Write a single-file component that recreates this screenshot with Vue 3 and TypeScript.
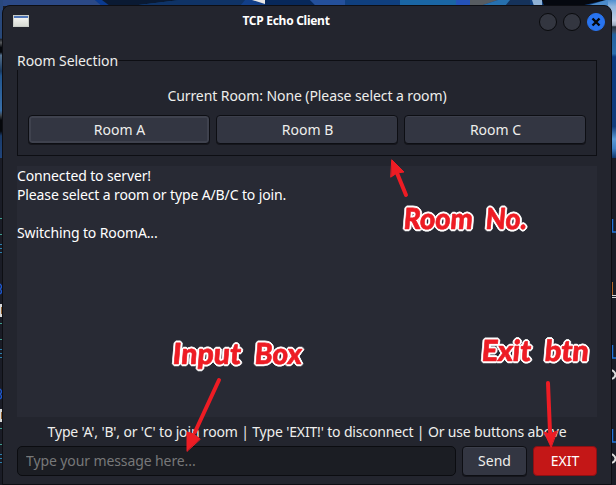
<script setup lang="ts">
import { ref } from 'vue'

const rooms = ['A', 'B', 'C']
const log = ref<string[]>(['Connected to server!', 'Please select a room or type A/B/C to join.', '', 'Switching to RoomA...'])
const message = ref('')
const leftDashes = [218, 234, 323, 339, 428, 444]
const leftTildes = [244, 349, 454]
const leftBlue = [284, 389]
const rightLinks = [219, 345, 429]
const rightBowls = [370, 454]
</script>

<template>
  <div class="desktop">
    <svg class="wallpaper" width="616" height="485" viewBox="0 0 616 485" aria-hidden="true">
      <defs>
        <linearGradient id="edge" x1="0" y1="0" x2="0" y2="1">
          <stop offset="0" stop-color="#29487f" />
          <stop offset=".24" stop-color="#284878" />
          <stop offset=".25" stop-color="#22262d" />
          <stop offset=".27" stop-color="#55585c" />
          <stop offset=".3" stop-color="#05070c" />
          <stop offset=".33" stop-color="#05070c" />
          <stop offset=".35" stop-color="#55718e" />
          <stop offset=".45" stop-color="#18385e" />
          <stop offset=".48" stop-color="#21558e" />
          <stop offset=".7" stop-color="#396fa9" />
          <stop offset=".73" stop-color="#3c444b" />
          <stop offset=".76" stop-color="#05070b" />
          <stop offset=".83" stop-color="#05070b" />
          <stop offset=".86" stop-color="#193b6a" />
          <stop offset="1" stop-color="#20447b" />
        </linearGradient>
        <linearGradient id="edge2" x1="0" y1="0" x2="0" y2="1">
          <stop offset="0" stop-color="#4f8fd0" />
          <stop offset=".04" stop-color="#8fb4dc" />
          <stop offset=".13" stop-color="#c3cfe4" />
          <stop offset=".16" stop-color="#9aa8bd" />
          <stop offset=".17" stop-color="#25303d" />
          <stop offset=".2" stop-color="#3b5068" />
          <stop offset=".22" stop-color="#2462a0" />
          <stop offset=".34" stop-color="#2a6cab" />
          <stop offset=".36" stop-color="#0b3a80" />
          <stop offset=".8" stop-color="#123c7b" />
          <stop offset=".88" stop-color="#5b9ad6" />
          <stop offset=".94" stop-color="#3f7fc4" />
          <stop offset="1" stop-color="#0f3569" />
        </linearGradient>
      </defs>
      <rect width="616" height="485" fill="#1a1c26" />
      <g>
        <rect width="616" height="6" fill="#0f3f7e" />
        <path d="M0 0H95L102 6H0Z" fill="#2b4986" />
        <path d="M95 0H102L110 6H102Z" fill="#0a3a90" />
        <path d="M102 0H180L130 6H110Z" fill="#0a1a33" />
        <path d="M180 0H245L255 6H130Z" fill="#0f3366" />
        <path d="M245 0H262L265 6H240Z" fill="#123f88" />
        <path d="M252 0H265V4Z" fill="#e8e6e4" />
        <path d="M265 0H310L316 6H265Z" fill="#07285a" />
        <path d="M310 0H345V6H316Z" fill="#24509b" />
        <path d="M400 0H456V6H400Z" fill="#1a66a4" />
        <path d="M456 0H470V6H456Z" fill="#2452b8" />
        <path d="M470 0H498L480 6H470Z" fill="#575c61" />
        <path d="M498 0H510V6H480Z" fill="#2670ae" />
        <path d="M510 0H530V6H505Z" fill="#15325a" />
        <path d="M532 0H542V6H534Z" fill="#8fb2d6" />
        <path d="M542 0H606L580 6H544Z" fill="#05080f" />
        <path d="M606 0H616V6H586Z" fill="#4b8bcb" />
      </g>
      <rect y="0" width="3" height="158" fill="url(#edge)" />
      <rect x="608" y="0" width="8" height="158" fill="url(#edge2)" />
      <rect v-for="y in leftDashes" :key="'d' + y" x="0" :y="y" width="2" height="1" fill="#3f9d8d" />
      <path v-for="y in leftTildes" :key="'t' + y" :d="`M0 ${y + .5}H2M0 ${y + 4.5}H2M0 ${y + 8.5}H2`" stroke="#2c7fae" />
      <path v-for="y in leftBlue" :key="'b' + y" :d="`M0 ${y}Q3 ${y + 3} 0 ${y + 5}Q3 ${y + 8} 0 ${y + 10}`" stroke="#1d56cc" stroke-width="1.5" fill="none" />
      <g v-for="y in leftBlue" :key="'w' + y">
        <rect x="0" :y="y + 20" width="2" height="13" fill="#d8d8d8" />
        <path :d="`M1.5 ${y + 23}V${y + 30}`" stroke="#936332" />
      </g>
      <path v-for="y in rightLinks" :key="'r' + y" :d="`M612.5 ${y}V${y + 13}H616`" stroke="#2272d8" stroke-width="1.5" fill="none" />
      <path d="M612.5 282V295" stroke="#b5682c" />
      <path d="M612 295.5H616M612 297.5H616" stroke="#d5d5d5" />
      <path v-for="y in rightBowls" :key="'o' + y" :d="`M612 ${y}Q619 ${y + 5} 612 ${y + 9}`" stroke="#dcdcdc" stroke-width="2" fill="none" />
    </svg>
    <main class="window">
      <header class="titlebar">
        <i class="app-icon"></i>
        <h1>TCP Echo Client</h1>
        <div class="controls">
          <button aria-label="Minimize"></button><button aria-label="Maximize"></button>
          <button class="close" aria-label="Close">
            <svg width="10" height="10" viewBox="0 0 10 10"><path d="M1.5 1.5 8.5 8.5M8.5 1.5 1.5 8.5" /></svg>
          </button>
        </div>
      </header>
      <section class="content">
        <fieldset>
          <legend>Room Selection</legend>
          <p class="current">Current Room: None (Please select a room)</p>
          <div class="rooms">
            <button v-for="room in rooms" :key="room" class="btn" :class="{ focused: room === 'A' }">Room {{ room }}</button>
          </div>
        </fieldset>
        <div class="log"><div v-for="(line, i) in log" :key="i">{{ line }}</div></div>
        <p class="hint">Type 'A', 'B', or 'C' to join room | Type 'EXIT!' to disconnect | Or use buttons above</p>
        <form @submit.prevent>
          <input v-model="message" placeholder="Type your message here..." />
          <button class="btn">Send</button>
          <button class="btn exit" type="button">EXIT</button>
        </form>
      </section>
    </main>
    <svg class="notes" width="616" height="485" viewBox="0 0 616 485">
      <g class="callout">
        <text transform="translate(403 229) skewX(-5)" textLength="69" lengthAdjust="spacingAndGlyphs">Room</text>
        <text transform="translate(485 229) skewX(-5)" textLength="41" lengthAdjust="spacingAndGlyphs">No.</text>
        <text transform="translate(172 364) skewX(-5)" textLength="68" lengthAdjust="spacingAndGlyphs">Input</text>
        <text transform="translate(254 364) skewX(-5)" textLength="47" lengthAdjust="spacingAndGlyphs">Box</text>
        <text transform="translate(481 361) skewX(-5)" textLength="49" lengthAdjust="spacingAndGlyphs">Exit</text>
        <text transform="translate(544 361) skewX(-5)" textLength="44" lengthAdjust="spacingAndGlyphs">btn</text>
      </g>
      <g class="arrow">
        <path d="M406 195 397 173M219 380 195 432M548 383 550 432" />
        <path class="head" d="M392 160 404 172 397 173 391 177ZM187 451 187 432 194 434 200 439ZM551 447 544 432 550 434 557 431Z" />
      </g>
    </svg>
  </div>
</template>

<style>
body { overflow: hidden; }
</style>
<style scoped>
* { box-sizing: border-box; }
.desktop { position: relative; width: 616px; height: 485px; padding: 5px 4px 0 2px; font: 14px/19px "Noto Sans", sans-serif; color: #eeeeec; overflow: hidden; }
.wallpaper, .notes { position: absolute; left: 0; top: 0; }
.notes { pointer-events: none; }
.window { position: relative; height: 480px; width: 610px; background: #23252e; border: 1px solid #0d0e13; border-radius: 8px 8px 0 0; display: flex; flex-direction: column; }
.titlebar { height: 31px; display: grid; grid-template-columns: 30px 1fr 76px; align-items: center; padding: 0 6px 0 10px; flex: none; }
.app-icon { width: 16px; height: 12px; margin-top: -1px; background: linear-gradient(#4e75b7 0 2px, #f3f4f1 2px, #d7dbd4); border: 1px solid #c9cdc8; }
h1 { font-size: 12px; line-height: 16px; text-align: center; margin: -2px 0 0; color: #fff; letter-spacing: -.28px; }
.controls { display: flex; gap: 6px; justify-content: flex-end; }
.controls button { width: 18px; height: 18px; border-radius: 50%; border: 1px solid #090a0d; background: #333640; padding: 0; display: grid; place-items: center; }
.controls .close { background: #2874f0; border-color: #2874f0; }
.controls path { stroke: #05080d; stroke-width: 2.4; fill: none; }
.content { padding: 14px 14px 9px; display: flex; flex-direction: column; flex: 1; }
p { margin: 0; text-align: center; }
fieldset { margin: 0 0 10px; border: 1px solid #0d0e13; padding: 16px 10px 10px; height: 105px; min-width: 0; }
legend { padding: 0; margin-left: -11px; height: 19px; letter-spacing: -.07px; }
.current { letter-spacing: -.08px; }
.rooms { display: flex; gap: 6px; margin-top: 10px; }
.btn { font: inherit; color: #eeeeec; height: 30px; padding: 0; border: 1px solid #0d0e13; border-radius: 4px; background: #333642; box-shadow: inset 0 1px #3c3f4b, 0 1px #15161c; }
.rooms .btn { flex: 1; height: 29px; padding-left: 1px; }
.btn.focused { box-shadow: inset 0 0 0 2px #3f424e, 0 1px #15161c; }
.log { background: #282a34; height: 251px; white-space: pre; color: #fff; letter-spacing: -.13px; }
.log div { height: 19px; }
.hint { margin-top: 5px; height: 19px; white-space: nowrap; letter-spacing: -.16px; }
form { display: flex; gap: 6px; margin-top: 5px; }
input { flex: 1; min-width: 0; height: 30px; background: #1b1d23; border: 1px solid #0b0c10; border-radius: 5px; padding: 0 8px 2px; font: inherit; letter-spacing: -.1px; color: #eee; }
input::placeholder { color: #777879; opacity: 1; }
form .btn { width: 65px; padding-bottom: 2px; }
form .exit { width: 64px; background: #c41717; border-color: #8d1014; color: #fff; box-shadow: none; }
.callout { filter: drop-shadow(1px 1px 0 #fff) drop-shadow(-1px -1px 0 #fff) drop-shadow(1px -1px 0 #fff) drop-shadow(-1px 1px 0 #fff); }
.callout text { font: 900 29px Lato, sans-serif; fill: #ed1c24; stroke: #ed1c24; stroke-width: .7px; stroke-linejoin: round; }
.arrow { stroke: #ed1c24; stroke-width: 4; stroke-linecap: round; fill: none; }
.arrow .head { fill: #ed1c24; stroke-width: 1; }
</style>
